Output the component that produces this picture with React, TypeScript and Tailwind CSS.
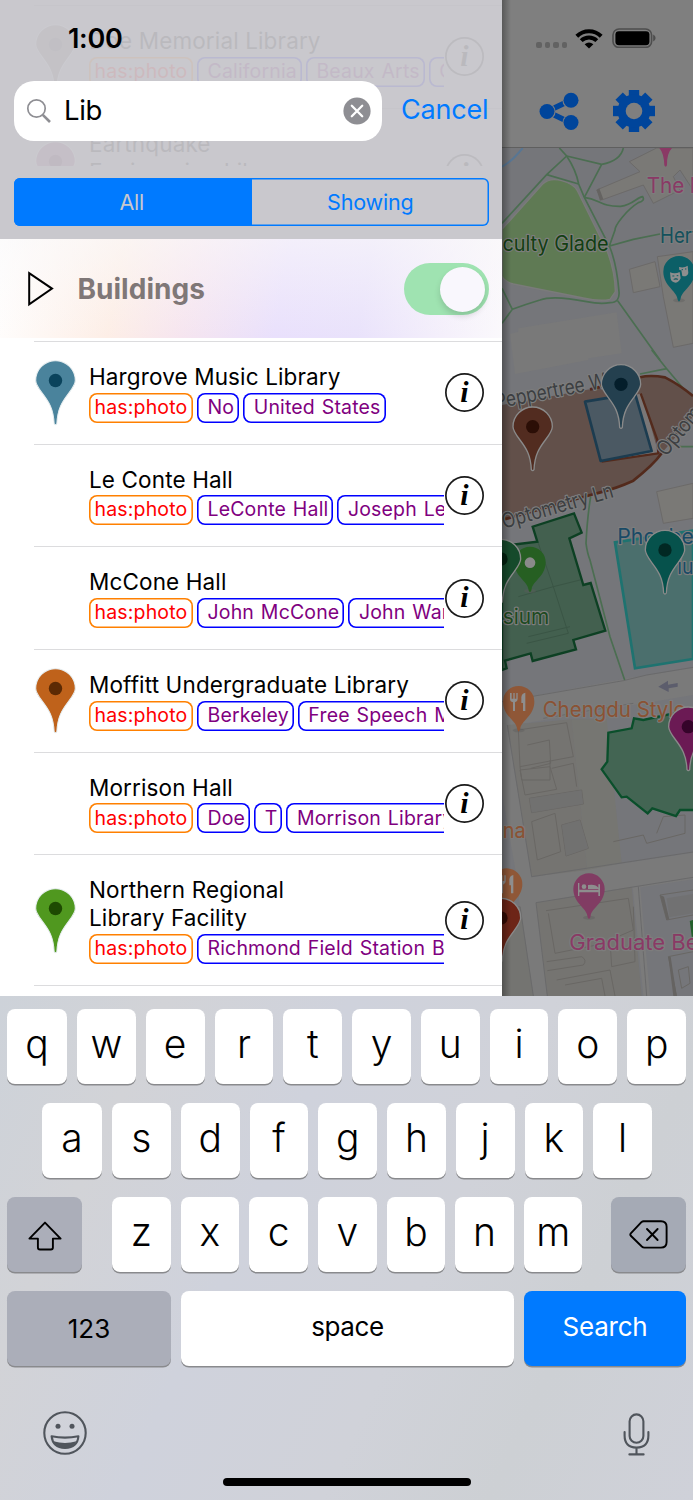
import clsx from "clsx";
import type { ReactNode } from "react";

type Tag = { label: string; photo?: boolean };
type Place = { name: string[]; pin?: [string, string]; tags: string[] };

const places: Place[] = [
  { name: ["Hargrove Music Library"], pin: ["#4a839c", "#0a435c"], tags: ["No", "United States"] },
  { name: ["Le Conte Hall"], tags: ["LeConte Hall", "Joseph LeConte"] },
  { name: ["McCone Hall"], tags: ["John McCone", "John Warnecke"] },
  { name: ["Moffitt Undergraduate Library"], pin: ["#bf621b", "#5c2a04"], tags: ["Berkeley", "Free Speech Movement"] },
  { name: ["Morrison Hall"], tags: ["Doe", "T", "Morrison Library"] },
  { name: ["Northern Regional", "Library Facility"], pin: ["#50981f", "#1e4a02"], tags: ["Richmond Field Station Building"] },
];

const scrolledPlaces: Place[] = [
  { name: ["Doe Memorial Library"], pin: ["#8a7f78", "#5f5a56"], tags: ["California", "Beaux Arts", "Charles"] },
  { name: ["Earthquake", "Engineering Library"], pin: ["#a05585", "#5c1040"], tags: ["Richmond"] },
];

const PIN_PATH =
  "M-4 129C-6 84-20 64-38 40C-52 21-59 12-59 0A59 59 0 0 1 59 0C59 12 52 21 38 40C20 64 6 84 4 129Q0 135-4 129Z";

function PlacePin({ fill, dot }: { fill: string; dot: string }) {
  return (
    <svg viewBox="-64 -64 128 200" className="h-[67px] w-[43px]">
      <path d={PIN_PATH} fill={fill} stroke="#e6edef" strokeWidth="3" />
      <circle r="20" fill={dot} />
    </svg>
  );
}

function TagPill({ label, photo }: Tag) {
  return (
    <span
      className={clsx(
        "flex h-[30px] shrink-0 items-center whitespace-nowrap rounded-[8px] text-[19.5px] leading-none",
        photo
          ? "w-[104px] justify-center tracking-[0.15px] text-[#ff0000] shadow-[inset_0_0_0_1.6px_#ff8000]"
          : "pl-[10.5px] pr-[5px] tracking-[0.16px] text-[#800080] shadow-[inset_0_0_0_1.6px_#0000ff] [word-spacing:1.2px]",
      )}
    >
      {label}
    </span>
  );
}

function InfoButton() {
  return (
    <span className="flex h-[39px] w-[39px] shrink-0 items-center justify-center rounded-full pb-[2px] font-['Liberation_Serif',serif] text-[30px] font-bold italic leading-none shadow-[inset_0_0_0_1.7px_#1a1a1a]">
      i
    </span>
  );
}

function PlaceRow({ place }: { place: Place }) {
  return (
    <div className="flex items-center pl-[34px]">
      <div className="flex w-[55px] shrink-0 justify-start">
        {place.pin && <PlacePin fill={place.pin[0]} dot={place.pin[1]} />}
      </div>
      <div className="w-[354.5px] shrink-0 overflow-hidden pb-[21.2px] pt-[21px]">
        {place.name.map((line) => (
          <p key={line} className="h-7 whitespace-nowrap text-[22.5px] leading-7 tracking-[0.13px]">
            {line}
          </p>
        ))}
        <div className="mt-[1.5px] flex gap-1">
          <TagPill label="has:photo" photo />
          {place.tags.map((tag) => (
            <TagPill key={tag} label={tag} />
          ))}
        </div>
      </div>
      <div className="ml-[1.5px]">
        <InfoButton />
      </div>
    </div>
  );
}

function SearchHeader() {
  return (
    <header className="relative h-[239px] bg-[#c9c8cd]">
      {/* rows scrolled under the translucent bar */}
      <div className="absolute inset-x-0 top-[5px] h-[161px] overflow-hidden opacity-[0.07]">
        {scrolledPlaces.map((place) => (
          <div key={place.name[0]}>
            <div className="ml-[34px] h-px bg-black/15" />
            <PlaceRow place={place} />
          </div>
        ))}
      </div>
      <div className="relative flex flex-col">
        <div className="h-[80.5px] pl-[68px] pt-[23px] text-[27px] font-semibold leading-8 tracking-[-0.3px]">1:00</div>
        <div className="flex items-center">
          <div className="ml-[13.5px] flex h-[60px] w-[368px] items-center rounded-[20px] bg-white pl-[12.5px] pr-[11px]">
            <svg viewBox="0 0 26 26" className="h-[26px] w-[26px]" fill="none" stroke="#8e8e93">
              <circle cx="10.5" cy="10.5" r="8.7" strokeWidth="1.7" />
              <path d="M16.8 16.8L24 24" strokeWidth="2.6" />
            </svg>
            <span className="ml-[12px] flex-1 text-[27.5px] tracking-[-0.3px]">Lib</span>
            <svg viewBox="0 0 28 28" className="h-[28px] w-[28px]">
              <circle cx="14" cy="14" r="13.6" fill="#8e8e93" />
              <path d="M8.8 8.8L19.2 19.2M19.2 8.8L8.8 19.2" stroke="#fff" strokeWidth="2.3" strokeLinecap="round" />
            </svg>
          </div>
          <span className="ml-[19.5px] whitespace-nowrap text-[27px] tracking-[-0.2px] text-[#007aff]">Cancel</span>
        </div>
        <div className="ml-[13.5px] mt-[37.5px] flex h-[48px] w-[475px] overflow-hidden rounded-[6px] text-[21.5px] tracking-[-0.2px] shadow-[inset_0_0_0_1.5px_#007aff]">
          <span className="flex flex-1 items-center justify-center bg-[#007aff] pr-[2px] text-[#c9c8cd]">All</span>
          <span className="flex flex-1 items-center justify-center text-[#007aff]">Showing</span>
        </div>
      </div>
    </header>
  );
}

function SectionHeader() {
  return (
    <div className="h-[102px] bg-white pb-[3px]">
      <div className="flex h-[99px] items-center bg-[linear-gradient(180deg,rgba(250,249,250,0.6),rgba(255,255,255,0)),linear-gradient(100deg,#ffffff_0%,#fdeee6_24%,#f6e5ef_38%,#e9e0fc_56%,#e9e2fb_72%,#f4effb_88%,#fbf9fc_100%)] pl-[27px] pr-[13.5px] pt-px">
        <svg viewBox="0 0 28 38" className="h-[38px] w-[28px]" fill="none" stroke="#000" strokeWidth="2">
          <path d="M2.2 3.2V34.4L25 18.6Z" />
        </svg>
        <h2 className="ml-[22.5px] flex-1 text-[28px] font-bold tracking-[0.02px] text-[#7f7777]">Buildings</h2>
        <span className="flex h-[52px] w-[85px] items-center justify-end rounded-full bg-[#9fe3b1] pr-[3.5px]">
          <span className="h-[45px] w-[45px] rounded-full bg-[#f9f7fd] shadow-[0_4px_6px_rgba(0,0,0,0.14)]" />
        </span>
      </div>
    </div>
  );
}

function MapPin({ x, y, fill, dot }: { x: number; y: number; fill: string; dot: string }) {
  return (
    <g transform={`translate(${x} ${y})`}>
      <path d={PIN_PATH} fill={fill} stroke="#8a8a8a" strokeWidth="4" />
      <circle r="20" fill={dot} />
    </g>
  );
}

function PoiPin({ x, y, fill, children }: { x: number; y: number; fill: string; children?: ReactNode }) {
  return (
    <g transform={`translate(${x} ${y})`}>
      <ellipse cy="86" rx="18" ry="6" fill="#5c5c5c" opacity=".4" />
      <path d="M0 90Q-4 88-5 80C-7 58-47 42-47 0A47 47 0 0 1 47 0C47 42 7 58 5 80Q4 88 0 90Z" fill={fill} />
      {children}
    </g>
  );
}

function MapLabel({
  x,
  y,
  fill,
  width,
  rotate = 0,
  children,
}: {
  x: number;
  y: number;
  fill: string;
  width: number;
  rotate?: number;
  children: string;
}) {
  return (
    <text
      transform={`translate(${x} ${y}) rotate(${rotate})`}
      fill={fill}
      fontSize="63"
      fontWeight="400"
      textLength={width}
      lengthAdjust="spacingAndGlyphs"
      stroke="#7d7d7d"
      strokeWidth="7"
      strokeLinejoin="round"
      paintOrder="stroke"
    >
      {children}
    </text>
  );
}

const Fork = () => (
  <path
    d="M-26-26V-8Q-26 0-17 2V28H-11V2Q-3 0-3-8V-26H-7V-9H-12V-26H-16V-9H-21V-26ZM8 4V-14Q10-26 20-27V28H13V4Z"
    fill="#8e8e8e"
  />
);

// Map units are a third of a pixel.
function CampusMap() {
  return (
    <svg viewBox="6 24 573 2544" className="h-[848px] w-[191px]">
      <rect x="6" y="24" width="573" height="2544" fill="#75767a" />

      {/* streets and blocks */}
      <path d="M6 1685L400 1612L579 1584V1665L120 1742L6 1760Z" fill="#7a7a7a" />
      <path d="M6 1750H20L95 2212L579 2138V2218L110 2290L145 2568H88L50 2210L6 1960Z" fill="#7a7a7a" />
      <path d="M22 1755L215 1738L262 2190L95 2210Z" fill="#757471" />
      <path d="M215 1738H320L365 2170L262 2190Z" fill="#767672" />
      <path d="M108 2288L395 2240L425 2568H142Z" fill="#757471" />
      <path d="M6 2300H62L100 2568H6Z" fill="#747471" />
      <path d="M398 2240L420 2236L450 2568H430Z" fill="#7b7b7b" />
      <path d="M6 1685L370 1622L440 1605L579 1582M130 1735L400 1690M22 1755L95 2210L579 2136M108 2288L579 2212M108 2288L142 2568M415 2240L440 2568M6 2310L60 2300L100 2568" fill="none" stroke="#6a6a6b" strokeWidth="3" />

      {/* buildings */}
      <g fill="#7a7976" stroke="#6c6a69" strokeWidth="3">
        <path d="M290 150L420 95L388 65L470 24H579V150L540 90L520 110L540 150L460 190L430 135L305 180Z" />
        <path d="M388 388L465 365L480 440L400 458ZM472 350L579 335V610L520 622L490 470Z" />
        <path d="M470 1055L579 1030V1135L490 1150Z" />
      </g>
      <path d="M30 582L55 575L55 565L350 517L365 640L265 655L265 660L45 702Z" fill="#797979" />
      <g fill="none" stroke="#696764" strokeWidth="3">
        <path d="M55 1770L200 1748L220 1850L60 1880ZM82 1815L148 1800L152 1870L92 1885M60 1880L65 1920H150V1860" />
        <path d="M60 1890L150 1880L170 1948L75 1965ZM155 1885L220 1870L230 1940M88 1975L245 1950L250 1992L95 2018ZM95 2045L165 2020L182 2135L112 2160ZM185 2055L240 2040L265 2125L198 2148Z" />
        <path d="M340 2105L430 2085L440 2110L555 2080V2025L490 2030L470 2080" />
        <path d="M138 2312L385 2275L400 2370L330 2400L335 2480L405 2465L400 2300M145 2320L165 2440L290 2415M140 2465L245 2450Q262 2460 250 2475L142 2492" />
        <path d="M170 2520L330 2490L345 2568M195 2535L305 2515L315 2568M480 2265L579 2250M480 2265L500 2340L579 2325M505 2450L579 2435M505 2450L530 2568M535 2490L565 2480L570 2530L545 2545Z" />
      </g>
      <path d="M88 1975L245 1950L250 1992L95 2018ZM185 2055L240 2040L265 2125L198 2148ZM500 2275L579 2262V2320L508 2332Z" fill="#717170" opacity=".8" />
      <path d="M290 150L300 182L310 178L298 145ZM505 2450L520 2568H530L512 2450ZM480 2265L500 2340L508 2338L492 2270Z" fill="#656361" />

      {/* footpaths */}
      <path d="M6 80Q35 65 68 24" stroke="#587693" strokeWidth="6" fill="none" />
      <path d="M6 268L128 132Q150 112 185 122Q222 132 232 152L322 335Q345 395 346 455L330 478Q300 485 250 474L40 432Q12 424 6 408Z" fill="#5f7a54" stroke="#7a7b7a" strokeWidth="4" />
      <g fill="none" stroke="#4b6e51" strokeWidth="5">
        <path d="M178 24L200 48L140 104L6 250M140 104L236 132M200 48L305 73Q362 62 370 24M305 73L253 172" />
        <path d="M200 48Q228 90 236 132L253 172L328 318Q350 370 357 455Q360 488 330 488Q300 493 260 485Q160 465 120 480Q80 492 37 508L6 550M37 508L6 445" />
        <path d="M253 172C300 178 300 200 362 199C400 194 410 172 428 170Q436 182 415 188C380 210 345 255 345 270L328 318L400 298L480 282M353 482L480 660" />
        <path d="M455 630L500 686L579 780M420 702L500 686M535 920H579" />
        <path d="M272 1070Q262 1130 258 1210Q262 1240 270 1260L330 1490L374 1620" />
      </g>

      {/* outlined campus areas */}
      <path d="M6 795L270 748L420 712Q450 704 495 712Q540 735 579 768V830L485 940Q460 975 400 1022Q350 1045 290 1060L6 1140Z" fill="#62504a" />
      <path d="M270 748L420 712Q450 704 495 712Q540 735 579 768M485 940Q460 975 400 1022Q350 1045 290 1060L6 1140" fill="none" stroke="#532a1c" strokeWidth="8" />
      <path d="M405 765L425 760L475 938L305 965L455 930Z" fill="#7a7777" />
      <path d="M422 760L472 900L475 940L305 965" fill="none" stroke="#532a1c" strokeWidth="7" />
      <path d="M255 785L405 760L455 933L302 963Z" fill="#4b5963" stroke="#1c3c50" strokeWidth="8" strokeLinejoin="round" />
      <path d="M6 1218L112 1205L98 1160L222 1120L245 1178L208 1195L250 1335L272 1329L316 1472L220 1500L228 1528L98 1563L92 1540L15 1562L20 1585L6 1590Z" fill="#43604f" stroke="#0d4023" strokeWidth="7" />
      <path d="M55 1370L160 1340L205 1480M85 1490L210 1460M115 1210L160 1340L240 1320M80 1510L205 1480" stroke="#3a5545" strokeWidth="3" fill="none" />
      <path d="M345 1207L579 1172V1557L405 1585Z" fill="#4b6f6d" stroke="#1e7370" strokeWidth="8" />
      <path d="M579 1725L520 1720L430 1740L402 1735L395 1765L325 1778L322 1865L305 1888L365 1972L380 1970L443 2020L457 2005L528 2028L540 2010H585V1725Z" fill="#436553" stroke="#0a4f2b" strokeWidth="7" />
      <path d="M585 2340L572 2345L579 2400" fill="#24602c" stroke="#24602c" strokeWidth="5" />
      <path d="M475 1640L504 1622V1634L533 1629V1640L506 1645V1656Z" fill="#5c5d6c" />

      {/* labels */}
      <MapLabel x={440} y={158} fill="#8a3965" width={113}>The</MapLabel>
      <MapLabel x={570} y={158} fill="#8a3965" width={46}>M</MapLabel>
      <MapLabel x={-60} y={334} fill="#123f12" width={386}>Faculty Glade</MapLabel>
      <MapLabel x={480} y={308} fill="#14515c" width={262}>Hertz Hall</MapLabel>
      <MapLabel x={-10} y={806} fill="#3c3f42" width={392} rotate={-11}>Peppertree Way</MapLabel>
      <MapLabel x={12} y={1166} fill="#3c3f42" width={345} rotate={-16}>Optometry Ln</MapLabel>
      <MapLabel x={498} y={952} fill="#3c3f42" width={350} rotate={-50}>Optometry Ln</MapLabel>
      <MapLabel x={352} y={1213} fill="#184a66" width={330}>Phoebe Ap</MapLabel>
      <MapLabel x={532} y={1301} fill="#184a66" width={100}>ium</MapLabel>
      <MapLabel x={8} y={1452} fill="#1d4a1f" width={140}>sium</MapLabel>
      <MapLabel x={128} y={1730} fill="#8b5233" width={428}>Chengdu Style</MapLabel>
      <MapLabel x={8} y={2095} fill="#8b5233" width={69}>na</MapLabel>
      <MapLabel x={208} y={2431} fill="#8a3965" width={450}>Graduate Berk</MapLabel>

      {/* markers */}
      <path d="M478 24H516Q500 40 501 76Q497 84 493 76Q492 40 478 24Z" fill="#8a3965" />
      <PoiPin x={537} y={395} fill="#0c5f67">
        <path d="M-27 2Q-12 8 2 1L5 20Q0 32-10 33Q-22 32-25 22ZM0-14Q15-10 26-18L28 4Q26 14 14 14L10 13L7-4L1-5Z" fill="#8e8e8e" />
        <path d="M-20 13H-14M-7 12H-2M8-6H12M18-8H22M-16 23Q-9 19-3 23" stroke="#0c5f67" strokeWidth="3" />
      </PoiPin>
      <MapPin x={98} y={860} fill="#522c20" dot="#2b0e06" />
      <MapPin x={363} y={733} fill="#24404f" dot="#041e2b" />
      <PoiPin x={90} y={1267} fill="#265f22">
        <circle r="16" cy="1" fill="#8a8a8a" />
      </PoiPin>
      <MapPin x={3} y={1257} fill="#164a2b" dot="#02210f" />
      <MapPin x={495} y={1230} fill="#06524c" dot="#012823" />
      <PoiPin x={56} y={1685} fill="#8f5737">
        <Fork />
      </PoiPin>
      <MapPin x={565} y={1760} fill="#6b1a54" dot="#35042a" />
      <PoiPin x={20} y={2232} fill="#8f5737">
        <Fork />
      </PoiPin>
      <MapPin x={3} y={2334} fill="#6d2517" dot="#340a03" />
      <PoiPin x={267} y={2247} fill="#813c63">
        <path d="M-33-18H-29V2H28V-14H33V21H28V10H-29V21H-33ZM-3 0V-12Q20-16 28-4V0Z" fill="#8e8e8e" />
        <circle cx="-15" cy="-7" r="7" fill="#8e8e8e" />
      </PoiPin>
    </svg>
  );
}

function MapPanel() {
  return (
    <section className="relative w-[191px]">
      <div className="h-[148px] border-b border-[#5f5f5f] bg-[#7f7f7f]">
        <div className="flex h-[76px] items-center pl-[34px]">
          <div className="mt-[14px] flex gap-[3px]">
            {[0, 1, 2, 3].map((n) => (
              <span key={n} className="h-[6px] w-[5.5px] rounded-[2px] bg-[#626262]" />
            ))}
          </div>
          <svg viewBox="0 0 28 21" className="ml-[8px] h-[21px] w-[28px]" fill="none" stroke="#000" strokeWidth="4">
            <path d="M1.8 8.2A17.4 17.4 0 0 1 26.2 8.2M6.2 12.6A11.2 11.2 0 0 1 21.8 12.6" />
            <path d="M14 20.5L9.6 16.2Q14 12.8 18.4 16.2Z" fill="#000" stroke="none" />
          </svg>
          <svg viewBox="0 0 44 20" className="ml-[9px] h-[20px] w-[44px]">
            <rect x="1" y="1" width="38.6" height="18.4" rx="6" fill="none" stroke="#4d4d4d" strokeWidth="1.6" />
            <rect x="3.4" y="3.2" width="34" height="14" rx="3.4" />
            <path d="M41.2 6.6Q43.6 8 43.6 10.1Q43.6 12.3 41.2 13.6Z" fill="#4d4d4d" />
          </svg>
        </div>
        <div className="mt-[13.5px] flex items-center pl-[37px]">
          <svg viewBox="0 0 40 38" className="h-[38px] w-[40px]" fill="#00459b">
            <path d="M8 19.5L31 8.5M8 19.5L31 30.5" stroke="#00459b" strokeWidth="5.5" />
            <circle cx="8" cy="19.5" r="8.6" fill="#7f7f7f" />
            <circle cx="32" cy="8.2" r="8.6" fill="#7f7f7f" />
            <circle cx="32" cy="30.5" r="8.6" fill="#7f7f7f" />
            <circle cx="8" cy="19.5" r="7.5" />
            <circle cx="32" cy="8.2" r="7.5" />
            <circle cx="32" cy="30.5" r="7.5" />
          </svg>
          <svg viewBox="-21 -21 42 42" className="ml-[34px] h-[42px] w-[42px]" fill="#00459b">
            {[0, 45, 90, 135].map((angle) => (
              <rect key={angle} x="-5.2" y="-21" width="10.4" height="42" transform={`rotate(${angle})`} />
            ))}
            <circle r="16.5" />
            <circle r="8.3" fill="#7f7f7f" />
          </svg>
        </div>
      </div>
      <CampusMap />
      <div className="absolute inset-y-0 left-0 w-[9px] bg-gradient-to-r from-black/30 to-transparent" />
    </section>
  );
}

function Key({ className, children }: { className?: string; children: ReactNode }) {
  return (
    <span
      className={clsx(
        "flex h-[75px] items-center justify-center rounded-[8px] shadow-[0_1.5px_0_#898a8d]",
        className,
      )}
    >
      {children}
    </span>
  );
}

function LetterKeys({ letters, wideFirst }: { letters: string; wideFirst?: boolean }) {
  return letters.split("").map((letter, i) => (
    <Key
      key={letter}
      className={clsx(
        "bg-white pb-[6px] text-[39px] font-light leading-none",
        wideFirst && i === 0 ? "w-[60px] shrink-0" : "flex-1",
      )}
    >
      {letter}
    </Key>
  ));
}

function Keyboard() {
  return (
    <div className="flex h-[504px] flex-col bg-[linear-gradient(115deg,#cdd2d9_0%,#d2d3d7_18%,#cfd2dc_38%,#d0d2d9_60%,#cdd0d4_78%,#cfd1d9_100%)] pt-[13px]">
      <div className="flex flex-col gap-[19px] px-[7px]">
        <div className="flex gap-[10px]">
          <LetterKeys letters="qwertyuiop" wideFirst />
        </div>
        <div className="flex gap-[10px] pl-[35px] pr-[34px]">
          <LetterKeys letters="asdfghjkl" wideFirst />
        </div>
        <div className="flex">
          <Key className="w-[75px] bg-[#abaeb9]">
            <svg viewBox="0 0 34 30" className="mt-[2px] h-[30px] w-[34px]" fill="none" stroke="#000" strokeWidth="1.9" strokeLinejoin="round">
              <path d="M17 1.6L32.6 17.6H24.9V26.5Q24.9 28.5 22.9 28.5H11.9Q9.9 28.5 9.9 26.5V17.6H1.4Z" />
            </svg>
          </Key>
          <div className="ml-[30px] mr-[28.5px] flex flex-1 gap-[10px]">
            <LetterKeys letters="zxcvbnm" />
          </div>
          <Key className="w-[75px] bg-[#a5aab5]">
            <svg viewBox="0 0 39 29" className="h-[29px] w-[39px]" fill="none" stroke="#000" strokeWidth="1.9" strokeLinejoin="round" strokeLinecap="round">
              <path d="M14.2 1.2H32Q37.6 1.2 37.6 6.8V22Q37.6 27.6 32 27.6H15.5Q14 27.6 12.8 26.5L1.8 15.8Q.8 14.6 1.8 13.4L12.4 2.2Q13.4 1.2 14.8 1.2Z" />
              <path d="M18 9L28.6 20M28.6 9L18 20" />
            </svg>
          </Key>
        </div>
        <div className="flex gap-[10px] text-[26px]">
          <Key className="w-[164px] bg-[#abaeb9]">123</Key>
          <Key className="flex-1 bg-white pb-1 tracking-[-0.4px]">space</Key>
          <Key className="w-[162px] bg-[#007aff] pb-1 tracking-[-0.2px] text-white">Search</Key>
        </div>
      </div>
      <div className="mt-[44px] flex items-center justify-between pl-[43px] pr-[43px]">
        <svg viewBox="0 0 44 44" className="h-[44px] w-[44px]" fill="none" stroke="#50555c" strokeWidth="2.1">
          <circle cx="22" cy="22" r="20.7" />
          <circle cx="15" cy="15.2" r="2.5" fill="#50555c" stroke="none" />
          <circle cx="29" cy="15.2" r="2.5" fill="#50555c" stroke="none" />
          <path d="M8.6 25.2Q22 28 35.4 25.2Q34.6 36.4 22 37Q9.6 36.4 8.6 25.2Z" strokeLinejoin="round" />
          <path d="M10.5 30.2Q22 33.6 33.5 30.2Q30 37 22 37Q14 37 10.5 30.2Z" fill="#50555c" stroke="none" />
        </svg>
        <svg viewBox="0 0 27 43" className="mt-[3px] h-[43px] w-[27px]" fill="none" stroke="#50555c" strokeWidth="2.1" strokeLinecap="round">
          <rect x="6.6" y="1.4" width="13.8" height="28.4" rx="6.9" />
          <path d="M1.6 19V22.5Q1.6 34.4 13.5 34.6Q25.4 34.4 25.4 22.5V19M13.5 34.8V41.4M6.4 41.4H20.6" />
        </svg>
      </div>
      <div className="mx-auto mt-[22px] h-[8px] w-[248px] rounded-full bg-black" />
    </div>
  );
}

export default function App() {
  return (
    <div className="h-[1500px] w-[693px] overflow-hidden bg-white font-[Inter,sans-serif] text-black">
      <main className="flex h-[996px] overflow-hidden">
        <aside className="w-[502px] shrink-0 bg-white">
          <SearchHeader />
          <SectionHeader />
          {places.map((place) => (
            <div key={place.name[0]}>
              <div className="ml-[34px] h-px bg-[#dcdcde]" />
              <PlaceRow place={place} />
            </div>
          ))}
          <div className="ml-[34px] h-px bg-[#dcdcde]" />
        </aside>
        <MapPanel />
      </main>
      <Keyboard />
    </div>
  );
}
